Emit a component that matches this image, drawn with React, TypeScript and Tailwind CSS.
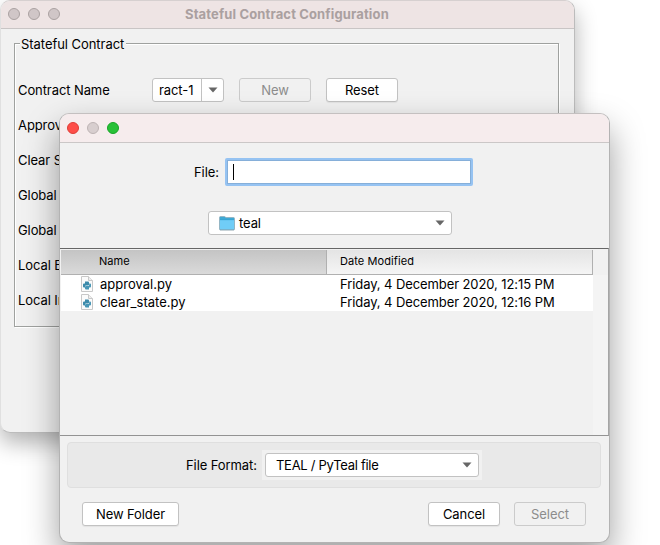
import React from "react";

function Lights({ active }: { active: boolean }) {
  const idle = "bg-[#d0c6c7] border-[#aaa1a1]";
  return (
    <div className="flex gap-2">
      <i className={`size-3 rounded-full border ${active ? "bg-[#fe4d48] border-[#dd3c36]" : idle}`} />
      <i className={`size-3 rounded-full border ${active ? "bg-[#d8cecf] border-[#bdb3b4]" : idle}`} />
      <i className={`size-3 rounded-full border ${active ? "bg-[#28c137] border-[#18a427]" : idle}`} />
    </div>
  );
}

function Arrow() {
  return (
    <svg width="10" height="6" viewBox="0 0 10 6" className="shrink-0">
      <path d="M0.5 0.5h9L5 5.5z" fill="#666" />
    </svg>
  );
}

function Button({ label, width, disabled }: { label: string; width: string; disabled?: boolean }) {
  return (
    <button
      className={`flex h-6 shrink-0 items-center justify-center rounded-[3px] border pt-px ${width} ${
        disabled ? "border-[#cbcbcb] text-[#8c8c8c]" : "border-[#c2c2c2] bg-white text-black shadow-[0_1px_1px_rgba(0,0,0,0.06)]"
      }`}
    >
      {label}
    </button>
  );
}

function Folder() {
  return (
    <svg width="16" height="15" viewBox="0 0 16 15">
      <path d="M0.5 1.5Q.5.5 1.5.5h4L7 1.5h7.5q1 0 1 1V13q0 1-1 1h-13q-1 0-1-1z" fill="#3fa9d5" stroke="#8fa9b5" strokeWidth=".7" />
      <path d="M1 4h14v9q0 .7-.7.7H1.7Q1 13.700 1 13z" fill="#70cdf7" />
      <path d="M1 3.700h14" stroke="#36a1d0" strokeWidth=".8" />
      <path d="M1 13.800h14" stroke="#8ba1aa" strokeWidth=".7" />
    </svg>
  );
}

function PyFile() {
  return (
    <svg width="12" height="16" viewBox="0 0 12 16">
      <path d="M.5.5h7l4 4v11H.5z" fill="#fbfbfb" stroke="#c8c8c8" />
      <path d="M7.500.5v4h4" fill="#eee" stroke="#c8c8c8" />
      <path d="M4 5.500h3q1 0 1 1V8.500q0 1-1 1H5q-1 0-1 1V11.500H3q-1 0-1-1V8.500q0-1 1-1h1z" fill="#3c8aaa" />
      <path d="M8 13.500H5q-1 0-1-1v-1.500q0-1 1-1h2.200q1 0 1-1V7.500h.8q1 0 1 1v2q0 1-1 1H8z" fill="#4796b6" />
    </svg>
  );
}

const labels = ["Approval File", "Clear State", "Global Bytes", "Global Ints", "Local Bytes", "Local Ints"];

const files = [
  { name: "approval.py", date: "Friday, 4 December 2020, 12:15 PM" },
  { name: "clear_state.py", date: "Friday, 4 December 2020, 12:16 PM" },
];

function ConfigWindow() {
  return (
    <div className="absolute left-0 top-0 flex h-[433px] w-[575px] flex-col overflow-hidden rounded-[10px] border border-[#bcbcbc] border-l-[#e0e0e0] border-t-[#d6d0d0] bg-[#f1f1f1] shadow-[0_10px_22px_rgba(0,0,0,0.3)]">
      <header className="flex h-7 shrink-0 items-center border-b border-[#c9c5c5] bg-[#eee4e4] pb-px pl-[7px]">
        <Lights active={false} />
        <h1 className="ml-[125px] whitespace-nowrap text-[13px] font-bold tracking-[0.14px] text-[#aaa0a0]">Stateful Contract Configuration</h1>
      </header>
      <section className="ml-[13px] mt-[14px] h-[284px] w-[545px] border border-[#9fa19f] shadow-[1px_1px_0_white,inset_1px_1px_0_white]">
        <h2 className="-mt-[9px] ml-[5px] h-[18px] w-[106px] whitespace-nowrap bg-[#f1f1f1] pl-[1px] leading-[18px] tracking-[-0.05px]">Stateful Contract</h2>
        <div className="mt-[25px] flex h-6 items-center pl-[3px]">
          <span className="w-[134px] pt-px">Contract Name</span>
          <div className="flex h-6 w-[72px] overflow-hidden rounded-[3px] border border-[#c2c2c2] bg-white">
            <span className="flex w-[49px] items-center border-r border-[#c2c2c2] pl-1.5 pt-px">ract-1</span>
            <span className="flex flex-1 items-center justify-center"><Arrow /></span>
          </div>
          <div className="ml-[15px] flex gap-[15px]">
            <Button label="New" width="w-[72px]" disabled />
            <Button label="Reset" width="w-[72px]" />
          </div>
        </div>
        {labels.map((label, i) => (
          <div key={label} className="mt-[11px] flex h-6 items-center pl-[3px]">
            <span className="w-[134px] whitespace-nowrap pt-px">{label}</span>
            {i === 0 && (
              <div className="flex gap-2">
                <span className="h-6 w-[371px] border border-[#969894] bg-white" />
                <span className="h-6 w-[20px] border border-[#969894] bg-white" />
              </div>
            )}
          </div>
        ))}
      </section>
    </div>
  );
}

function FileDialog() {
  return (
    <div className="absolute left-[59px] top-[113px] flex h-[430px] w-[551px] flex-col overflow-hidden rounded-[10px] border border-[#b3b3b3] border-t-[#c4c0c0] bg-[#f1f1f1] shadow-[0_16px_34px_rgba(0,0,0,0.38)]">
      <header className="flex h-[29px] shrink-0 items-center border-b border-[#cbc7c7] bg-[#f6eced] pl-[7px]">
        <Lights active />
      </header>
      <div className="mt-[15px] flex h-7 items-center pl-[134px]">
        <label className="w-[31px] pt-px">File:</label>
        <div className="flex h-7 w-[248px] items-center rounded-[2px] border-2 border-[#96c3f2] bg-white">
          <div className="flex h-full w-full items-center border border-[#86afd9] pl-[5px]">
            <i className="h-4 w-px bg-black" />
          </div>
        </div>
      </div>
      <div className="ml-[148px] mt-[25px] flex h-6 w-[244px] shrink-0 items-center rounded-[3px] border border-[#c2c2c2] bg-white pl-2.5 pr-1.5">
        <Folder />
        <span className="ml-1 flex-1 pt-px">teal</span>
        <Arrow />
      </div>
      <div className="mt-[13px] flex h-[188px] w-[549px] shrink-0 flex-col border-y border-r border-b-[#939393] border-r-[#a5a5a5] border-t-[#666]">
        <div className="ml-px mt-px flex h-[25px] w-[532px] shrink-0 border-b border-r border-[#b0b0b0] text-[11px] tracking-[0.08px]">
          <div className="flex w-[266px] items-center border-r border-[#b0b0b0] bg-linear-to-b from-[#c4c4c4] to-[#dadada] pb-0.5 pl-[38px]">Name</div>
          <div className="flex flex-1 items-center bg-linear-to-b from-[#e4e4e4] to-[#f5f5f5] pb-0.5 pl-[13px]">Date Modified</div>
        </div>
        <div className="flex flex-1">
          <div className="ml-px h-[36px] w-[532px] bg-white">
            {files.map((f) => (
              <div key={f.name} className="flex h-[18px] items-center whitespace-nowrap pl-5">
                <PyFile />
                <span className="ml-[7px] w-[240px] tracking-[0.02px]">{f.name}</span>
                <span>{f.date}</span>
              </div>
            ))}
          </div>
          <div className="flex-1 bg-[#f4f4f4]" />
        </div>
      </div>
      <div className="ml-[7px] mt-[6px] flex h-[46px] w-[534px] shrink-0 items-center rounded border border-[#dfdfdf] bg-[#e9e9e9] pl-[118px]">
        <span className="w-[76px] whitespace-nowrap pt-px">File Format:</span>
        <div className="bg-[#f1f1f1] p-[3px]">
          <div className="flex h-6 w-[214px] items-center rounded-[3px] border border-[#c2c2c2] bg-white pl-2.5 pr-1.5">
            <span className="flex-1 pt-px tracking-[-0.28px]">TEAL / PyTeal file</span>
            <Arrow />
          </div>
        </div>
      </div>
      <footer className="mt-[14px] flex pl-[22px]">
        <Button label="New Folder" width="w-[97px]" />
        <div className="ml-[249px] flex gap-[14px]">
          <Button label="Cancel" width="w-[72px]" />
          <Button label="Select" width="w-[72px]" disabled />
        </div>
      </footer>
    </div>
  );
}

export default function App() {
  return (
    <main className="relative h-[545px] w-[660px] overflow-hidden bg-white font-['Inter',sans-serif] text-[13px] leading-none tracking-[-0.09px] text-black">
      <ConfigWindow />
      <FileDialog />
    </main>
  );
}
